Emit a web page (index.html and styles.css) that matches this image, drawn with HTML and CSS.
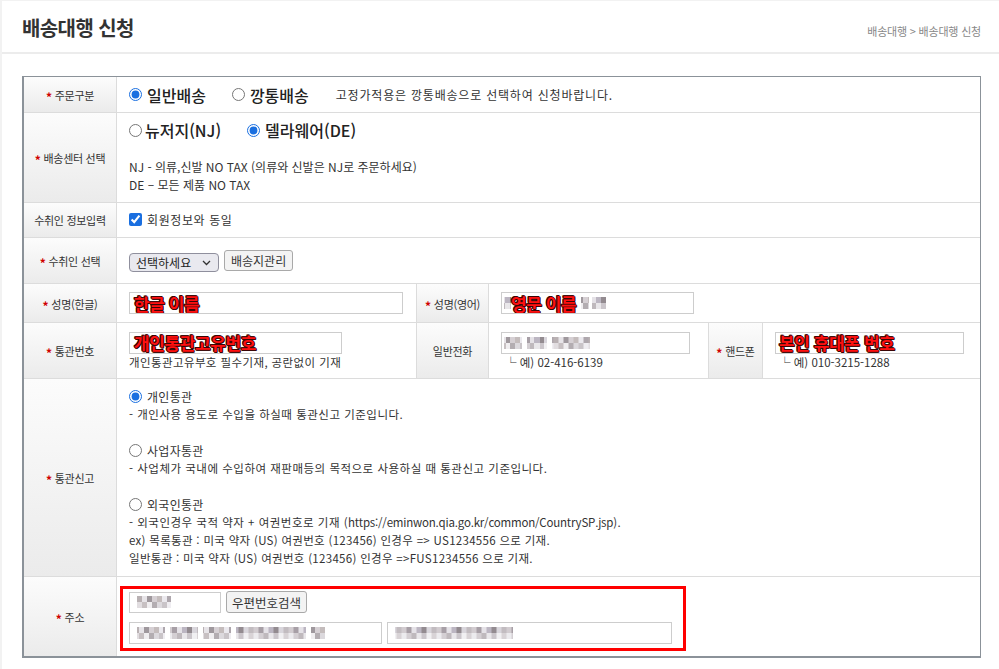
FILE: index.html
```html
<!DOCTYPE html>
<html lang="ko">
<head>
<meta charset="utf-8">
<title>배송대행 신청</title>
<link rel="stylesheet" href="styles.css">
</head>
<body>
<div class="page">
  <header class="head">
    <h1 class="title">배송대행 신청</h1>
    <div class="crumb">배송대행 &gt; 배송대행 신청</div>
  </header>
  <main class="content">
    <table class="form">
      <colgroup>
        <col class="c1"><col class="c2"><col class="c3"><col class="c4"><col class="c5"><col class="c6">
      </colgroup>
      <tbody>
        <tr class="r1">
          <th><span class="req">*</span>주문구분</th>
          <td colspan="5">
            <div class="opts">
              <label class="opt big"><input type="radio" name="otype" checked><span>일반배송</span></label>
              <label class="opt big"><input type="radio" name="otype"><span>깡통배송</span></label>
              <span class="note">고정가적용은 깡통배송으로 선택하여 신청바랍니다.</span>
            </div>
          </td>
        </tr>
        <tr class="r2">
          <th><span class="req">*</span>배송센터 선택</th>
          <td colspan="5" class="top">
            <div class="opts">
              <label class="opt big tight"><input type="radio" name="center"><span>뉴저지(NJ)</span></label>
              <label class="opt big"><input type="radio" name="center" checked><span>델라웨어(DE)</span></label>
            </div>
            <p class="desc">NJ - 의류,신발 NO TAX (의류와 신발은 NJ로 주문하세요)<br>DE – 모든 제품 NO TAX</p>
          </td>
        </tr>
        <tr class="r3">
          <th>수취인 정보입력</th>
          <td colspan="5">
            <label class="chk"><input type="checkbox" checked><span>회원정보와 동일</span></label>
          </td>
        </tr>
        <tr class="r4">
          <th><span class="req">*</span>수취인 선택</th>
          <td colspan="5">
            <div class="ctrls">
              <span class="sel-wrap">
                <select class="sel"><option>선택하세요</option></select>
                <svg class="chev" width="9" height="6" viewBox="0 0 9 6"><path d="M1 1l3.5 3.5L8 1" fill="none" stroke="#333" stroke-width="1.3"/></svg>
              </span>
              <button type="button" class="btn">배송지관리</button>
            </div>
          </td>
        </tr>
        <tr class="r5">
          <th><span class="req">*</span>성명(한글)</th>
          <td>
            <div class="field f-kname"><span class="mark">한글 이름</span></div>
          </td>
          <th><span class="req">*</span>성명(영어)</th>
          <td colspan="3">
            <div class="field f-ename"><span class="mz mz-b mw7"></span><span class="mark">영문 이름</span><span class="mz mz-a mw8 gap"></span><span class="mz mz-b mw14 gap2"></span></div>
          </td>
        </tr>
        <tr class="r6">
          <th><span class="req">*</span>통관번호</th>
          <td>
            <div class="field f-pcc"><span class="mark">개인통관고유번호</span></div>
            <div class="hint wide">개인통관고유부호 필수기재, 공란없이 기재</div>
          </td>
          <th>일반전화</th>
          <td>
            <div class="field f-tel"><span class="mz mz-a mw18"></span><span class="mz mz-b mw20 gap"></span><span class="mz mz-a mw38 gap"></span></div>
            <div class="hint ex">└ 예) 02-416-6139</div>
          </td>
          <th><span class="req">*</span>핸드폰</th>
          <td>
            <div class="field f-hp"><span class="mark">본인 휴대폰 번호</span></div>
            <div class="hint ex">└ 예) 010-3215-1288</div>
          </td>
        </tr>
        <tr class="r7">
          <th><span class="req">*</span>통관신고</th>
          <td colspan="5" class="top customs">
            <div class="cblock">
              <label class="copt"><input type="radio" name="customs" checked><span>개인통관</span></label>
              <div class="cdesc">- 개인사용 용도로 수입을 하실때 통관신고 기준입니다.</div>
            </div>
            <div class="cblock">
              <label class="copt"><input type="radio" name="customs"><span>사업자통관</span></label>
              <div class="cdesc">- 사업체가 국내에 수입하여 재판매등의 목적으로 사용하실 때 통관신고 기준입니다.</div>
            </div>
            <div class="cblock">
              <label class="copt"><input type="radio" name="customs"><span>외국인통관</span></label>
              <div class="cdesc">- 외국인경우 국적 약자 + 여권번호로 기재 (<span class="url">https://eminwon.qia.go.kr/common/CountrySP.jsp</span>).</div>
              <div class="cdesc mixed">ex) 목록통관 : 미국 약자 (US) 여권번호 (123456) 인경우 =&gt; US1234556 으로 기재.</div>
              <div class="cdesc mixed">일반통관 : 미국 약자 (US) 여권번호 (123456) 인경우 =&gt;FUS1234556 으로 기재.</div>
            </div>
          </td>
        </tr>
        <tr class="r8">
          <th><span class="req">*</span>주소</th>
          <td colspan="5" class="top addr">
            <div class="redbox">
              <div class="line">
                <div class="field f-zip"><span class="mz mz-a mw34 gap3"></span></div>
                <button type="button" class="btn btn-zip">우편번호검색</button>
              </div>
              <div class="line line2">
                <div class="field f-addr1"><span class="mz mz-a mw28 gap3"></span><span class="mz mz-b mw28 gap"></span><span class="mz mz-a mw28 gap"></span><span class="mz mz-b mw70 gap"></span><span class="mz mz-a mw14 gap"></span></div>
                <div class="field f-addr2"><span class="mz mz-b mw120 gap3"></span></div>
              </div>
            </div>
          </td>
        </tr>
      </tbody>
    </table>
  </main>
</div>
</body>
</html>
```

FILE: styles.css
```css
* { box-sizing: border-box; }

body {
  margin: 0;
  background: #f2f2f2;
  font-family: "Noto Sans CJK KR", "Noto Sans", sans-serif;
  font-size: 12px;
  color: #333;
}

.page {
  margin: 1px 0 0 2px;
  background: #fff;
  height: 668px;
}

.head {
  height: 53px;
  display: flex;
  align-items: center;
  justify-content: space-between;
  padding: 2px 18px 0 20px;
  border-bottom: 2px solid #ececec;
}

.title {
  margin: 0;
  font-size: 20px;
  font-weight: 700;
  letter-spacing: -0.6px;
  color: #333;
}

.crumb {
  font-size: 11px;
  color: #888;
  letter-spacing: -0.2px;
  padding-top: 6px;
}

.content {
  padding: 22px 18px 0 20px;
}

.form {
  width: 959px;
  table-layout: fixed;
  border-collapse: separate;
  border-spacing: 0;
  border: 1px solid #8b9299;
  border-left-width: 2px;
  border-bottom-width: 2px;
}

.c1 { width: 92px; }
.c2 { width: 300px; }
.c3 { width: 72px; }
.c4 { width: 220px; }
.c5 { width: 54px; }
.c6 { width: 218px; }

.form th,
.form td {
  border-left: 1px solid #dcdcdc;
  border-bottom: 1px solid #dcdcdc;
  padding: 0 12px;
  vertical-align: middle;
  text-align: left;
}

.form tr > :first-child { border-left: 0; }
.form tr:last-child > * { border-bottom: 0; }

.form th {
  font-weight: normal;
  font-size: 11px;
  letter-spacing: -0.3px;
  text-align: center;
  padding: 0 2px;
  color: #333;
  background: linear-gradient(#fcfcfc, #ebebeb);
}

.req {
  color: #d00000;
  font-weight: 700;
  font-size: 12px;
  margin-right: 3px;
  position: relative;
  top: 2px;
}

.r1 > * { height: 36px; }
.r2 > * { height: 90px; }
.r3 > * { height: 35px; }
.r4 > * { height: 46px; }
.r5 > * { height: 39px; }
.r6 > * { height: 56px; }
.r7 > * { height: 198px; }
.r8 > * { height: 79px; }

.form td.top { vertical-align: top; }

.opts {
  display: flex;
  align-items: center;
  height: 18px;
}

.form .r2 td.top { padding-top: 8px; }

.opt {
  display: inline-flex;
  align-items: center;
  gap: 5px;
  margin-right: 26px;
}

.opt input,
.copt input {
  margin: 0;
  width: 13px;
  height: 13px;
  accent-color: #1a6fe0;
}

.big {
  font-size: 16px;
  font-weight: 500;
  color: #222;
  letter-spacing: 0;
}

.tight { gap: 3px; margin-right: 26px; }

.note {
  font-size: 12px;
  letter-spacing: 0.8px;
  margin-left: 1px;
}

.desc {
  margin: 19px 0 0;
  line-height: 18px;
  font-size: 12px;
}

.chk {
  display: inline-flex;
  align-items: center;
  gap: 5px;
  letter-spacing: 0.6px;
}

.chk input {
  margin: 0;
  width: 13px;
  height: 13px;
  accent-color: #1a6fe0;
}

.ctrls {
  display: flex;
  align-items: flex-start;
  gap: 5px;
}

.sel-wrap {
  position: relative;
  display: inline-block;
  margin-top: 3px;
}

.sel {
  appearance: none;
  -webkit-appearance: none;
  width: 90px;
  height: 19px;
  padding: 0 18px 0 6px;
  border: 1px solid #8f8f9d;
  border-radius: 4px;
  background: #e9e9ef;
  font-family: "Noto Sans CJK KR", sans-serif;
  font-size: 12px;
  color: #222;
  line-height: 17px;
}

.chev {
  position: absolute;
  right: 8px;
  top: 7px;
  pointer-events: none;
}

.btn {
  height: 21px;
  padding: 0 6px;
  border: 1px solid #a9a9a9;
  border-radius: 3px;
  background: #f3f3f3;
  font-family: "Noto Sans CJK KR", sans-serif;
  font-size: 12px;
  color: #333;
  line-height: 19px;
}

.field {
  display: flex;
  align-items: center;
  height: 22px;
  border: 1px solid #cdcdcd;
  background: #fff;
  padding: 0 4px;
  overflow: hidden;
}

.f-kname { width: 274px; }
.f-ename { width: 193px; padding-left: 2px; }
.f-pcc { width: 213px; }
.f-tel { width: 189px; padding-left: 2px; }
.f-hp { width: 189px; padding-left: 3px; }
.f-zip { width: 92px; height: 21px; }
.f-addr1 { width: 253px; }
.f-addr2 { width: 286px; }

.mark {
  font-size: 17px;
  font-weight: 700;
  line-height: 1;
  color: #ff1010;
  letter-spacing: -0.4px;
  text-shadow: 1px 0 0 #3a0505, -1px 0 0 #3a0505, 0 1px 0 #3a0505, 0 -1px 0 #3a0505, 1px 1px 0 #3a0505, -1px -1px 0 #3a0505;
  white-space: nowrap;
}

.hint {
  font-size: 11.5px;
  line-height: 16px;
  color: #333;
  white-space: nowrap;
}

.hint.wide { letter-spacing: 0.4px; }
.hint.ex { padding-left: 4px; }

.mz {
  display: inline-block;
  flex: none;
  height: 12px;
  background:
    linear-gradient(90deg, #b9b1b3 0 5px, #e7e4e8 5px 10px, #9f989d 10px 15px, #d6d0d4 15px 20px, #c4bcbc 20px 25px, #ebe9ee 25px 30px, #aea7ad 30px 35px) top / 35px 6px repeat-x,
    linear-gradient(90deg, #e1dde0 0 5px, #c7c0c2 5px 10px, #f0eef0 10px 15px, #b3adb1 15px 20px, #dcd9dd 20px 25px, #c9c4c8 25px 30px, #efedf1 30px 35px) bottom / 35px 6px repeat-x;
}

.mz-b {
  background:
    linear-gradient(90deg, #d2ccd0 0 5px, #a79fa6 5px 10px, #e5e2e7 10px 15px, #bcb6c2 15px 20px, #938b90 20px 25px, #d9d6dc 25px 30px, #c2bcc0 30px 35px) top / 35px 6px repeat-x,
    linear-gradient(90deg, #ecebee 0 5px, #d4cfd3 5px 10px, #bfb9bd 10px 15px, #e9e7ea 15px 20px, #cbc6cb 20px 25px, #f1f0f2 25px 30px, #d8d3d6 30px 35px) bottom / 35px 6px repeat-x;
}

.mw7 { width: 7px; }
.mw8 { width: 8px; }
.mw14 { width: 14px; }
.mw18 { width: 18px; }
.mw20 { width: 20px; }
.mw28 { width: 28px; }
.mw34 { width: 34px; }
.mw38 { width: 38px; }
.mw70 { width: 70px; }
.mw120 { width: 118px; }

.gap { margin-left: 5px; }
.gap2 { margin-left: 3px; }
.gap3 { margin-left: 3px; }

.form td.customs {
  padding-top: 9px;
  line-height: 18px;
}

.cblock + .cblock { margin-top: 19px; }

.copt {
  display: flex;
  align-items: center;
  gap: 5px;
  height: 17px;
  font-size: 12px;
  color: #333;
  letter-spacing: 0.3px;
}

.cdesc {
  font-size: 11.5px;
  line-height: 18px;
  white-space: nowrap;
  letter-spacing: 0.5px;
}

.cdesc.mixed { letter-spacing: 0.3px; }
.url { letter-spacing: -0.2px; }

.form td.addr {
  padding: 9px 0 0 3px;
}

.redbox {
  width: 566px;
  border: 3px solid #ff0000;
  padding: 2px 11px 4px 6px;
}

.line {
  display: flex;
  align-items: center;
  gap: 5px;
}

.line2 { margin-top: 9px; }

.btn-zip {
  height: 22px;
  padding: 0 5px;
  font-size: 12.5px;
}
```
